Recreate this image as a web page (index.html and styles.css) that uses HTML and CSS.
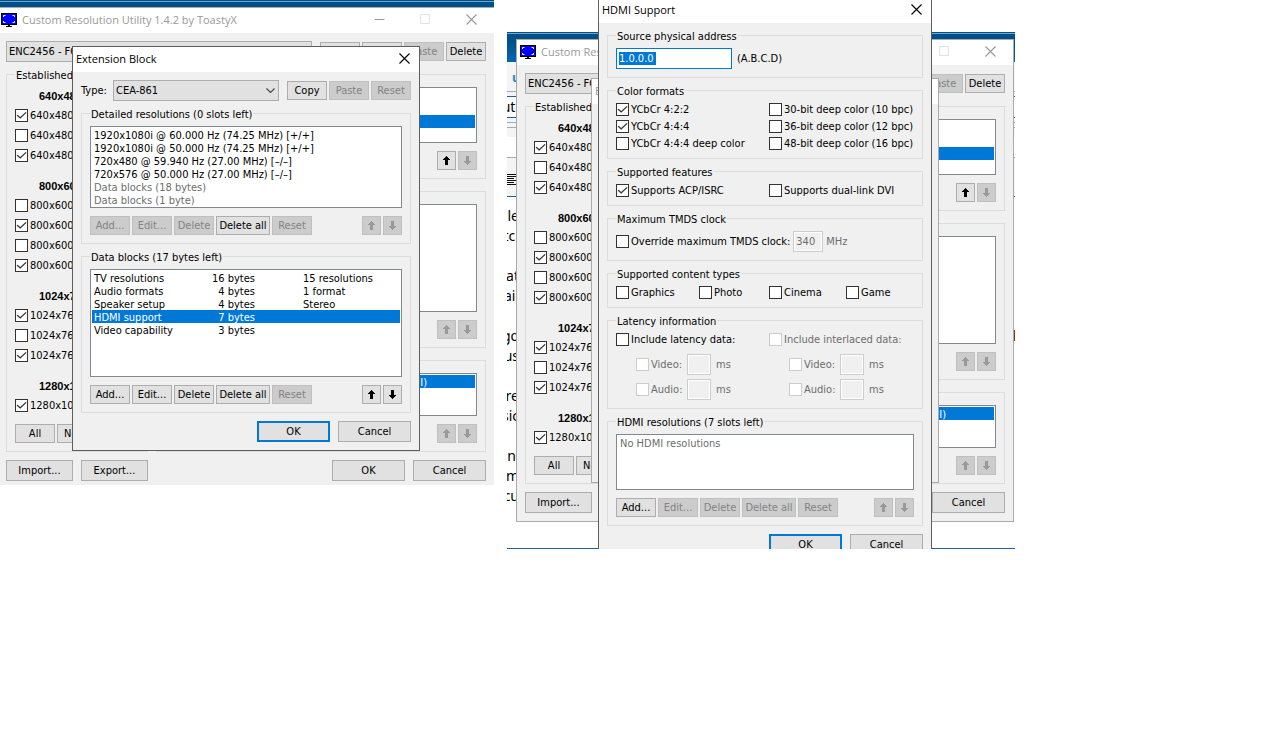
FILE: index.html
```
<!DOCTYPE html>
<html lang="en">
<head>
<meta charset="utf-8">
<title>Custom Resolution Utility</title>
<link rel="stylesheet" href="styles.css">
</head>
<body>
<svg class="defs" aria-hidden="true">
  <symbol id="up" viewBox="0 0 7 9"><path d="M3 0h1v1h1v1h1v1h1v1h-2v5h-3v-5h-2v-1h1v-1h1v-1h1z"/></symbol>
  <symbol id="down" viewBox="0 0 7 9"><path d="M3 9h1v-1h1v-1h1v-1h1v-1h-2v-5h-3v5h-2v1h1v1h1v1h1z"/></symbol>
  <symbol id="close" viewBox="0 0 11 11"><path d="M.5 .5l10 10M10.5 .5l-10 10" fill="none" stroke="currentColor" stroke-width="1.1"/></symbol>
  <symbol id="max" viewBox="0 0 11 11"><path d="M.5 .5h9v9h-9z" fill="none" stroke="currentColor"/></symbol>
  <symbol id="min" viewBox="0 0 11 11"><path d="M.5 5.5h10" fill="none" stroke="currentColor"/></symbol>
  <symbol id="chevron" viewBox="0 0 9 5"><path d="M.5 .5l4 4l4-4" fill="none" stroke="#444" stroke-width="1.100"/></symbol>
  <symbol id="monitor" viewBox="0 0 16 14">
    <path d="M0 0h16v12h-16z"/><path d="M1 1h14v10h-14z" fill="#00f"/>
    <path d="M7 12h2v1h2v1h-6v-1h2z"/>
    <path d="M2.5 4v-1.500h2M11.500 2.500h2v1.500M13.500 8v1.500h-2M4.500 9.500h-2v-1.500" fill="none" stroke="#fff"/>
  </symbol>
</svg>

<main class="desktop">
  <section class="scene scene-left">
    <div class="taskline"></div>
    <div class="window main-window">
      <header class="titlebar inactive">
        <svg class="app-icon"><use href="#monitor"/></svg>
        <h1>Custom Resolution Utility 1.4.2 by ToastyX</h1>
        <button class="ctl" aria-label="Minimize"><svg><use href="#min"/></svg></button>
        <button class="ctl faint" aria-label="Maximize"><svg><use href="#max"/></svg></button>
        <button class="ctl" aria-label="Close"><svg><use href="#close"/></svg></button>
      </header>
      <div class="body">
        <div class="bar">
          <select class="grow" aria-label="Display"><option>ENC2456 - FC</option></select>
          <div class="btns"><button class="btn" aria-label="Edit"></button><button class="btn" aria-label="Copy"></button><button class="btn" disabled>Paste</button><button class="btn">Delete</button></div>
        </div>
        <div class="columns">
          <fieldset class="established">
            <legend>Established</legend>
            <h2>640x480</h2>
            <label><input type="checkbox" checked>640x480</label>
            <label><input type="checkbox">640x480</label>
            <label><input type="checkbox" checked>640x480</label>
            <h2>800x600</h2>
            <label><input type="checkbox">800x600</label>
            <label><input type="checkbox" checked>800x600</label>
            <label><input type="checkbox">800x600</label>
            <label><input type="checkbox" checked>800x600</label>
            <h2>1024x768</h2>
            <label><input type="checkbox" checked>1024x768</label>
            <label><input type="checkbox">1024x768</label>
            <label><input type="checkbox" checked>1024x768</label>
            <h2>1280x1024</h2>
            <label><input type="checkbox" checked>1280x1024</label>
            <div class="btns"><button class="btn">All</button><button class="btn">None</button></div>
          </fieldset>
          <div class="stack">
            <fieldset class="untitled">
              <ul class="list h56"><li></li><li></li><li class="sel"></li></ul>
              <div class="btns end"><button class="btn arrow" aria-label="Up"><svg><use href="#up"/></svg></button><button class="btn arrow" disabled aria-label="Down"><svg><use href="#down"/></svg></button></div>
            </fieldset>
            <fieldset class="untitled">
              <ul class="list h108"></ul>
              <div class="btns end"><button class="btn arrow" disabled aria-label="Up"><svg><use href="#up"/></svg></button><button class="btn arrow" disabled aria-label="Down"><svg><use href="#down"/></svg></button></div>
            </fieldset>
            <fieldset class="untitled">
              <ul class="list h43"><li class="sel tail">I)</li></ul>
              <div class="btns end"><button class="btn arrow" disabled aria-label="Up"><svg><use href="#up"/></svg></button><button class="btn arrow" disabled aria-label="Down"><svg><use href="#down"/></svg></button></div>
            </fieldset>
          </div>
        </div>
        <footer><button class="btn tool">Import...</button><button class="btn tool">Export...</button><span class="grow"></span><button class="btn big">OK</button><button class="btn big">Cancel</button></footer>
      </div>
    </div>

    <div class="window dialog ext-dialog">
      <header class="titlebar"><h1>Extension Block</h1><button class="ctl small" aria-label="Close"><svg><use href="#close"/></svg></button></header>
      <div class="body">
        <div class="bar">
          <label class="type" for="type">Type:</label>
          <div class="combo grow"><select id="type"><option>CEA-861</option></select><svg><use href="#chevron"/></svg></div>
          <div class="btns"><button class="btn">Copy</button><button class="btn" disabled>Paste</button><button class="btn" disabled>Reset</button></div>
        </div>
        <fieldset><legend>Detailed resolutions (0 slots left)</legend>
          <ul class="list h82">
            <li>1920x1080i @ 60.000 Hz (74.25 MHz) [+/+]</li>
            <li>1920x1080i @ 50.000 Hz (74.25 MHz) [+/+]</li>
            <li>720x480 @ 59.940 Hz (27.00 MHz) [–/–]</li>
            <li>720x576 @ 50.000 Hz (27.00 MHz) [–/–]</li>
            <li class="dim">Data blocks (18 bytes)</li>
            <li class="dim">Data blocks (1 byte)</li>
          </ul>
          <div class="btns"><button class="btn" disabled>Add...</button><button class="btn" disabled>Edit...</button><button class="btn" disabled>Delete</button><button class="btn all">Delete all</button><button class="btn" disabled>Reset</button><span class="grow"></span><button class="btn arrow" disabled aria-label="Up"><svg><use href="#up"/></svg></button><button class="btn arrow" disabled aria-label="Down"><svg><use href="#down"/></svg></button></div>
        </fieldset>
        <fieldset><legend>Data blocks (17 bytes left)</legend>
          <div class="list h108">
            <table>
              <tr><td>TV resolutions</td><td>16 bytes</td><td>15 resolutions</td></tr>
              <tr><td>Audio formats</td><td>4 bytes</td><td>1 format</td></tr>
              <tr><td>Speaker setup</td><td>4 bytes</td><td>Stereo</td></tr>
              <tr class="sel"><td>HDMI support</td><td>7 bytes</td><td></td></tr>
              <tr><td>Video capability</td><td>3 bytes</td><td></td></tr>
            </table>
          </div>
          <div class="btns"><button class="btn">Add...</button><button class="btn">Edit...</button><button class="btn">Delete</button><button class="btn all">Delete all</button><button class="btn" disabled>Reset</button><span class="grow"></span><button class="btn arrow" aria-label="Up"><svg><use href="#up"/></svg></button><button class="btn arrow" aria-label="Down"><svg><use href="#down"/></svg></button></div>
        </fieldset>
        <footer><span class="grow"></span><button class="btn big default">OK</button><button class="btn big">Cancel</button></footer>
      </div>
    </div>
  </section>

  <section class="scene scene-right">
    <div class="backdrop">
      <div class="caption"></div>
      <div class="link-row">u</div>
      <div class="address"><p>uti</p></div>
      <div class="ribbon">
        <div class="tabs"></div><div class="gap-row"></div><div class="sheet"></div>
        <div class="tools"><svg class="lines" viewBox="0 0 9 11"><path d="M0 .5h9M0 2.500h9M0 4.500h7M0 6.500h9M0 8.500h7M0 10.500h9" stroke="#111"/></svg></div>
      </div>
      <div class="document">
        <p>lle</p><p>tc.</p><p class="para">at</p><p>ail</p><p class="para">go</p><p>us</p><p class="para">re</p><p>sic</p><p class="para">n'</p><p>m</p><p>cu</p>
        <i class="mark"></i>
      </div>
    </div>

    <div class="window main-window">
      <header class="titlebar inactive">
        <svg class="app-icon"><use href="#monitor"/></svg>
        <h1>Custom Resolution Utility 1.4.2 by ToastyX</h1>
        <button class="ctl" aria-label="Minimize"><svg><use href="#min"/></svg></button>
        <button class="ctl faint" aria-label="Maximize"><svg><use href="#max"/></svg></button>
        <button class="ctl" aria-label="Close"><svg><use href="#close"/></svg></button>
      </header>
      <div class="body">
        <div class="bar">
          <select class="grow" aria-label="Display"><option>ENC2456 - FC</option></select>
          <div class="btns"><button class="btn" aria-label="Edit"></button><button class="btn" aria-label="Copy"></button><button class="btn" disabled>Paste</button><button class="btn">Delete</button></div>
        </div>
        <div class="columns">
          <fieldset class="established">
            <legend>Established</legend>
            <h2>640x480</h2>
            <label><input type="checkbox" checked>640x480</label>
            <label><input type="checkbox">640x480</label>
            <label><input type="checkbox" checked>640x480</label>
            <h2>800x600</h2>
            <label><input type="checkbox">800x600</label>
            <label><input type="checkbox" checked>800x600</label>
            <label><input type="checkbox">800x600</label>
            <label><input type="checkbox" checked>800x600</label>
            <h2>1024x768</h2>
            <label><input type="checkbox" checked>1024x768</label>
            <label><input type="checkbox">1024x768</label>
            <label><input type="checkbox" checked>1024x768</label>
            <h2>1280x1024</h2>
            <label><input type="checkbox" checked>1280x1024</label>
            <div class="btns"><button class="btn">All</button><button class="btn">None</button></div>
          </fieldset>
          <div class="stack">
            <fieldset class="untitled">
              <ul class="list h56"><li></li><li></li><li class="sel"></li></ul>
              <div class="btns end"><button class="btn arrow" aria-label="Up"><svg><use href="#up"/></svg></button><button class="btn arrow" disabled aria-label="Down"><svg><use href="#down"/></svg></button></div>
            </fieldset>
            <fieldset class="untitled">
              <ul class="list h108"></ul>
              <div class="btns end"><button class="btn arrow" disabled aria-label="Up"><svg><use href="#up"/></svg></button><button class="btn arrow" disabled aria-label="Down"><svg><use href="#down"/></svg></button></div>
            </fieldset>
            <fieldset class="untitled">
              <ul class="list h43"><li class="sel tail">I)</li></ul>
              <div class="btns end"><button class="btn arrow" disabled aria-label="Up"><svg><use href="#up"/></svg></button><button class="btn arrow" disabled aria-label="Down"><svg><use href="#down"/></svg></button></div>
            </fieldset>
          </div>
        </div>
        <footer><button class="btn tool">Import...</button><span class="grow"></span><button class="btn big">Cancel</button></footer>
      </div>
    </div>

    <div class="window ext-dialog ext-behind">
      <header class="titlebar inactive"><h1>Extension Block</h1></header>
    </div>

    <div class="window dialog hdmi-dialog">
      <header class="titlebar"><h1>HDMI Support</h1><button class="ctl small" aria-label="Close"><svg><use href="#close"/></svg></button></header>
      <div class="body">
        <fieldset><legend>Source physical address</legend>
          <label class="field"><input class="text address-input" type="text" value="1.0.0.0">(A.B.C.D)</label>
        </fieldset>
        <fieldset><legend>Color formats</legend>
          <div class="pair">
            <label><input type="checkbox" checked>YCbCr 4:2:2</label><label><input type="checkbox">30-bit deep color (10 bpc)</label>
            <label><input type="checkbox" checked>YCbCr 4:4:4</label><label><input type="checkbox">36-bit deep color (12 bpc)</label>
            <label><input type="checkbox">YCbCr 4:4:4 deep color</label><label><input type="checkbox">48-bit deep color (16 bpc)</label>
          </div>
        </fieldset>
        <fieldset><legend>Supported features</legend>
          <div class="pair"><label><input type="checkbox" checked>Supports ACP/ISRC</label><label><input type="checkbox">Supports dual-link DVI</label></div>
        </fieldset>
        <fieldset><legend>Maximum TMDS clock</legend>
          <div class="field clock-row"><label><input type="checkbox">Override maximum TMDS clock:</label><input class="text clock" type="text" value="340" disabled aria-label="TMDS clock"><span class="dim">MHz</span></div>
        </fieldset>
        <fieldset><legend>Supported content types</legend>
          <div class="kinds"><label><input type="checkbox">Graphics</label><label><input type="checkbox">Photo</label><label><input type="checkbox">Cinema</label><label><input type="checkbox">Game</label></div>
        </fieldset>
        <fieldset><legend>Latency information</legend>
          <div class="pair">
            <div class="latency">
              <label><input type="checkbox">Include latency data:</label>
              <div class="field sub"><label class="dim"><input type="checkbox" disabled>Video:</label><input class="text ms" type="text" disabled aria-label="Video latency"><span class="dim">ms</span></div>
              <div class="field sub"><label class="dim"><input type="checkbox" disabled>Audio:</label><input class="text ms" type="text" disabled aria-label="Audio latency"><span class="dim">ms</span></div>
            </div>
            <div class="latency">
              <label class="dim"><input type="checkbox" disabled>Include interlaced data:</label>
              <div class="field sub"><label class="dim"><input type="checkbox" disabled>Video:</label><input class="text ms" type="text" disabled aria-label="Interlaced video latency"><span class="dim">ms</span></div>
              <div class="field sub"><label class="dim"><input type="checkbox" disabled>Audio:</label><input class="text ms" type="text" disabled aria-label="Interlaced audio latency"><span class="dim">ms</span></div>
            </div>
          </div>
        </fieldset>
        <fieldset><legend>HDMI resolutions (7 slots left)</legend>
          <ul class="list h56"><li class="dim">No HDMI resolutions</li></ul>
          <div class="btns"><button class="btn">Add...</button><button class="btn" disabled>Edit...</button><button class="btn" disabled>Delete</button><button class="btn all" disabled>Delete all</button><button class="btn" disabled>Reset</button><span class="grow"></span><button class="btn arrow" disabled aria-label="Up"><svg><use href="#up"/></svg></button><button class="btn arrow" disabled aria-label="Down"><svg><use href="#down"/></svg></button></div>
        </fieldset>
        <footer><span class="grow"></span><button class="btn big default">OK</button><button class="btn big">Cancel</button></footer>
      </div>
    </div>
  </section>
</main>
</body>
</html>
```
FILE: styles.css
```
* { box-sizing: border-box; }
body { margin: 0; background: #fff; overflow: hidden; }
body, button, input, select, legend {
  font-family: "DejaVu Sans Condensed", "DejaVu Sans", Tahoma, sans-serif;
  font-size: 11px;
  line-height: 13px;
  color: #000;
}
.defs { position: absolute; width: 0; height: 0; }
h1, h2, p, ul { margin: 0; padding: 0; }
ul { list-style: none; }
.grow { flex: 1; min-width: 0; }

/* Desktop canvas: windows are free-floating */
.desktop { display: flex; align-items: flex-start; gap: 13px; }
.scene { position: relative; overflow: hidden; flex: none; }
.scene-left { width: 494px; height: 485px; }
.scene-right { width: 508px; height: 549px; }
.window { position: absolute; background: #f0f0f0; border: 1px solid #aaa; }
.dialog { border-color: #5e5e5e; }
.main-window { left: -3px; top: 7px; width: 498px; }
.scene-right .main-window { left: 9px; top: 39px; }
.ext-dialog { left: 72px; top: 46px; width: 348px; }
.ext-behind { left: 84px; top: 78px; height: 405px; }
.hdmi-dialog { left: 91px; top: -3px; width: 334px; }

.titlebar { display: flex; align-items: center; height: 25px; background: #fff; padding: 0 0 2px 3px; }
.titlebar h1 { flex: 1; font: 400 11px/16px "Open Sans", "Noto Sans", sans-serif; white-space: nowrap; }
.inactive { color: #999; }
.app-icon { width: 16px; height: 14px; margin-right: 5px; }
.ctl { display: flex; align-items: center; justify-content: center; width: 46px; height: 23px; padding: 0; border: 0; background: none; color: inherit; }
.ctl.small { width: 30px; color: #000; }
.ctl.faint { color: #e2e2e2; }
.ctl svg { width: 11px; height: 11px; }

.body { display: flex; flex-direction: column; gap: 6px; padding: 8px; }
.hdmi-dialog .body { padding-top: 6px; }
.bar { display: flex; align-items: center; }
.type { width: 32px; }
.columns { display: flex; gap: 8px; }
.stack { flex: 1; display: flex; flex-direction: column; gap: 12px; padding-top: 6px; }
footer { display: flex; gap: 8px; margin-top: 2px; }

fieldset { margin: 0; padding: 0 8px 8px; border: 1px solid #dcdcdc; min-width: 0; }
legend { height: 13px; padding: 0 1px; margin-bottom: 6px; line-height: 15px; white-space: nowrap; }
.untitled { padding-top: 12px; }
.established { width: 142px; }
.established legend { margin-bottom: 5px; }
.established h2 { height: 20px; margin-top: 10px; padding-left: 24px; font: 700 11px/20px "Liberation Sans", Arial, sans-serif; }
.established legend + h2 { margin-top: 0; }
.established label { height: 20px; padding-bottom: 1px; }

label { display: flex; align-items: center; gap: 2px; white-space: nowrap; }
input[type="checkbox"] {
  appearance: none;
  flex: none;
  position: relative;
  width: 13px;
  height: 13px;
  margin: 0;
  border: 1px solid #333;
  background: #fff;
}
input[type="checkbox"]:checked::after {
  content: "";
  position: absolute;
  inset: 1px 0;
  background: #333;
  clip-path: polygon(5% 50%, 14% 41%, 38% 67%, 88% 12%, 96% 20%, 38% 85%);
}
input[type="checkbox"]:disabled { border-color: #ccc; }

.text { width: 116px; height: 21px; margin: 0; padding: 1px 2px; border: 1px solid #7a7a7a; outline: none; background: #fff; }
.text:disabled { border-color: #ccc; background: #f0f0f0; box-shadow: inset 0 0 0 1px #fff; color: #6d6d6d; }
.address-input {
  border-color: #0078d7;
  color: #fff;
  background: linear-gradient(#0078d7, #0078d7) 2px 3px / 37px 13px no-repeat #fff;
}
.field { display: flex; align-items: center; gap: 5px; }
.clock { width: 30px; }
.clock-row { gap: 3px; }
.ms { width: 24px; }
.dim { color: #6d6d6d; }

select { appearance: none; height: 21px; margin: 0; padding: 0 2px; border: 1px solid #adadad; border-radius: 0; background: #e1e1e1; }
.combo { display: grid; align-items: center; }
.combo select, .combo svg { grid-area: 1 / 1; }
.combo svg { justify-self: end; width: 9px; height: 5px; margin-right: 4px; pointer-events: none; }

.btns { display: flex; gap: 2px; margin-top: 8px; }
.bar .btns { margin-top: 0; margin-left: 8px; }
.end { justify-content: flex-end; }
.btn { display: flex; align-items: center; justify-content: center; width: 40px; height: 19px; padding: 0; border: 1px solid #adadad; background: #e1e1e1; line-height: 15px; white-space: nowrap; }
.btn:disabled { border-color: #bfbfbf; background: #ccc; color: #838383; }
.all { width: 54px; }
.arrow { width: 19px; }
.arrow svg { width: 7px; height: 9px; fill: currentColor; }
.arrow:disabled { color: #999; }
.tool { width: 67px; height: 21px; }
.big { width: 73px; height: 21px; }
.default { border: 2px solid #0078d7; }

.list { padding: 1px; border: 1px solid #828790; background: #fff; }
.list li { height: 13px; padding: 0 2px; line-height: 15px; white-space: nowrap; }
.list .sel { background: #0078d7; color: #fff; }
.list .tail { padding-right: 48px; text-align: right; }
.h43 { height: 43px; }
.h56 { height: 56px; }
.h82 { height: 82px; }
.h108 { height: 108px; }
table { width: 100%; border-collapse: collapse; table-layout: fixed; }
td { height: 13px; padding: 2px 2px 0; line-height: 11px; white-space: nowrap; }
td:nth-child(1) { width: 110px; }
td:nth-child(2) { width: 55px; text-align: right; }
td:nth-child(3) { padding-left: 46px; }

.pair { display: grid; grid-template-columns: 153px 1fr; gap: 4px 0; }
.kinds { display: grid; grid-template-columns: 83px 70px 77px 1fr; }
.latency { display: flex; flex-direction: column; gap: 4px; }
.latency > label { margin-bottom: 4px; }
.sub { padding-left: 20px; }
.sub label { width: 46px; }

/* Document window behind the dialogs */
.backdrop { margin-top: 32px; height: 517px; border-bottom: 1px solid #1f5f96; background: #fff; }
.caption { height: 30px; background: linear-gradient(#00508a 0 1px, #6ea6cc 1px 2px, #00508a 2px 9px, #0067b0); }
.link-row { height: 30px; padding: 6px 0 0 5px; background: #f4f4f5; border-bottom: 1px solid #8db0d8; font: 700 13px/18px "Noto Sans", sans-serif; color: #2a8bc9; }
.address { height: 26px; border-top: 4px solid #f4f4f5; background: #fff; font: 14px/22px "Noto Sans", sans-serif; box-shadow: inset 0 1px #1f5f96, inset 0 -1px #1f5f96; }
.ribbon { height: 79px; border-bottom: 1px solid #1f5f96; background: #f4f4f5; }
.tabs { height: 5px; border-bottom: 1px solid #8db0d8; }
.gap-row { height: 5px; border-bottom: 1px solid #aaa; }
.sheet { height: 30px; border-top: 9px solid #f4f4f5; border-bottom: 1px solid #aaa; background: #fff; }
.tools { padding-top: 16px; }
.lines { display: block; width: 9px; height: 11px; }
.document { position: relative; padding-top: 9px; font: 14px/20px "Noto Sans", sans-serif; }
.backdrop p { display: flex; justify-content: flex-end; width: 12px; }
.document .para { margin-top: 20px; }
.mark { position: absolute; right: 0; top: 133px; width: 1px; height: 11px; background: #8a3c00; }

.taskline { height: 8px; background: linear-gradient(#00508a 0 1px, #6ea6cc 1px 2px, #00508a 2px); }
```
